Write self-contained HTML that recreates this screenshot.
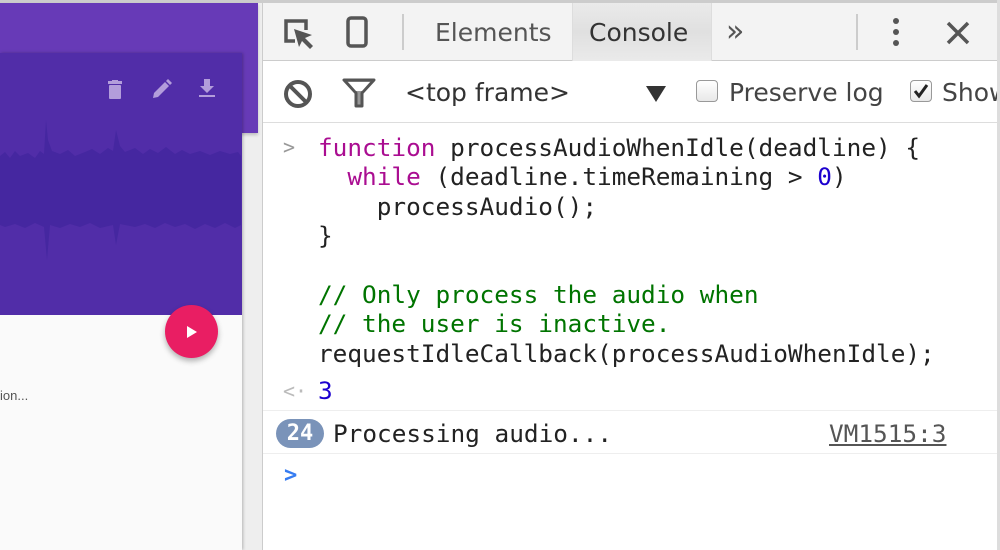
<!DOCTYPE html>
<html><head><meta charset="utf-8"><style>
*{margin:0;padding:0;box-sizing:border-box}
body{width:1000px;height:550px;overflow:hidden;background:#fff;position:relative;font-family:"Liberation Sans",sans-serif}
.abs{position:absolute}
.mono{font-family:"DejaVu Sans Mono","Liberation Mono",monospace;font-size:24.4px;white-space:pre;line-height:29.4px;color:#222}
.ui{font-family:"DejaVu Sans","Liberation Sans",sans-serif;font-size:25px;color:#333}
</style></head><body>
<!-- left page -->
<div class="abs" style="left:0;top:0;width:262px;height:550px;background:#eeeeee"></div>
<div class="abs" style="left:0;top:0;width:262px;height:3px;background:#ccc"></div>
<div class="abs" style="left:0;top:3px;width:258px;height:130px;background:#673ab7;box-shadow:0 2px 3px rgba(0,0,0,.2)"></div>
<div class="abs" style="left:0;top:53px;width:242px;height:497px;background:#fafafa;box-shadow:1px 0 3px rgba(0,0,0,.25)"></div>
<div class="abs" style="left:0;top:53px;width:242px;height:262px;background:#512da8"></div>
<svg class="abs" style="left:0;top:100px" width="242" height="160" viewBox="0 0 242 160">
<path fill="#4527a0" d="M0 56 L5 52 L10 58 L15 51 L20 56 L28 53 L35 58 L40 51 L44 54 L46 20 L48 40 L52 51 L60 54 L68 50 L75 56 L85 52 L92 49 L100 54 L108 48 L113 51 L116 30 L120 46 L125 52 L135 48 L143 54 L150 49 L158 53 L166 47 L175 54 L182 50 L190 54 L200 51 L210 55 L220 51 L230 54 L238 52 L241 56 L241 125 L235 128 L225 123 L215 128 L205 124 L195 129 L185 124 L175 127 L165 123 L155 128 L145 124 L135 127 L120 124 L116 145 L113 125 L100 128 L90 123 L80 127 L70 124 L60 128 L50 125 L47 160 L44 127 L35 123 L25 128 L15 124 L5 127 L0 125 Z"/>
</svg>
<svg class="abs" style="left:106px;top:80px" width="18" height="20" viewBox="0 0 18 20"><rect x="2" y="1" width="14" height="3" fill="#b39ddb"/><rect x="6" y="0" width="6" height="2" fill="#b39ddb"/><rect x="3" y="5" width="12" height="14" rx="1" fill="#b39ddb"/></svg>
<svg class="abs" style="left:151px;top:79px" width="21" height="21" viewBox="0 0 21 21"><path d="M2 19 L3 14 L14 3 L18 7 L7 18 Z M15 2 L17 0 L21 4 L19 6Z" fill="#b39ddb"/></svg>
<svg class="abs" style="left:198px;top:79px" width="18" height="20" viewBox="0 0 18 20"><path d="M6 0 H12 V7 H16 L9 14 L2 7 H6Z" fill="#b39ddb"/><rect x="1" y="16" width="16" height="2" fill="#b39ddb"/></svg>
<div class="abs" style="left:165px;top:305px;width:53px;height:53px;border-radius:50%;background:#e91e63;box-shadow:0 3px 6px rgba(0,0,0,.3)"></div>
<svg class="abs" style="left:186px;top:325px" width="12" height="14"><path d="M1 1 L11 7 L1 13Z" fill="#fff"/></svg>
<div class="abs" style="left:0;top:388px;font-size:13px;color:#555">ion...</div>
<!-- devtools -->
<div class="abs" style="left:262px;top:0;width:738px;height:550px;background:#fff;border-left:1px solid #ccc"></div>
<div class="abs" style="left:263px;top:0;width:737px;height:3px;background:#ccc"></div>
<div class="abs" style="left:263px;top:3px;width:737px;height:58px;background:#f3f3f3;border-bottom:1px solid #ccc"></div>
<div class="abs" style="left:572px;top:3px;width:140px;height:58px;background:linear-gradient(#eaeaea,#e0e0e0,#eaeaea);border-left:1px solid #ddd;border-right:1px solid #ddd"></div>
<svg class="abs" style="left:282px;top:17px" width="34" height="34" viewBox="0 0 34 34"><path d="M13 24 H4 V4 H24 V13" fill="none" stroke="#555" stroke-width="3.5"/><path d="M12 12 L30 18 L23 21 L31 29 L28 32 L20 24 L17 30Z" fill="#555"/></svg>
<svg class="abs" style="left:346px;top:16px" width="22" height="32"><rect x="2" y="2" width="18" height="28" rx="3" fill="none" stroke="#555" stroke-width="3.5"/></svg>
<div class="abs" style="left:402px;top:14px;width:2px;height:36px;background:#ccc"></div>
<div class="abs ui" style="left:435px;top:18px;color:#555">Elements</div>
<div class="abs ui" style="left:589px;top:18px;color:#333">Console</div>
<div class="abs ui" style="left:726px;top:14px;color:#555;font-size:30px">»</div>
<div class="abs" style="left:856px;top:14px;width:2px;height:36px;background:#ccc"></div>
<svg class="abs" style="left:890px;top:16px" width="12" height="32"><circle cx="6" cy="5" r="3" fill="#555"/><circle cx="6" cy="16" r="3" fill="#555"/><circle cx="6" cy="27" r="3" fill="#555"/></svg>
<svg class="abs" style="left:945px;top:20px" width="26" height="26"><path d="M3 3 L23 23 M23 3 L3 23" stroke="#555" stroke-width="3.5"/></svg>
<div class="abs" style="left:263px;top:122px;width:737px;height:1px;background:#ddd"></div>
<svg class="abs" style="left:282px;top:78px" width="32" height="32"><circle cx="16" cy="16" r="12" fill="none" stroke="#555" stroke-width="4"/><path d="M8 8 L24 24" stroke="#555" stroke-width="4"/></svg>
<svg class="abs" style="left:342px;top:78px" width="34" height="30"><path d="M2 2 H32 L20 15 V28 H14 V15Z" fill="#999" stroke="#555" stroke-width="3" stroke-linejoin="round"/><path d="M6 4 H28 L20 13 H14Z" fill="#fff"/></svg>
<div class="abs ui" style="left:405px;top:78px;color:#333">&lt;top frame&gt;</div>
<svg class="abs" style="left:645px;top:85px" width="22" height="18"><path d="M1 1 H21 L11 17Z" fill="#333"/></svg>
<div class="abs" style="left:696px;top:80px;width:22px;height:22px;border:1.5px solid #999;border-radius:4px;background:linear-gradient(#fff,#e8e8e8)"></div>
<div class="abs ui" style="left:729px;top:78px;color:#444">Preserve log</div>
<div class="abs" style="left:910px;top:80px;width:22px;height:22px;border:1.5px solid #999;border-radius:4px;background:linear-gradient(#fff,#e8e8e8)"></div>
<svg class="abs" style="left:912px;top:82px" width="18" height="18"><path d="M3 9 L7 14 L15 3" fill="none" stroke="#222" stroke-width="3"/></svg>
<div class="abs ui" style="left:942px;top:78px;color:#444">Show</div>
<div class="abs mono" style="left:283px;top:133px;color:#999;font-size:20px">&gt;</div>
<div class="abs mono" style="left:318px;top:133px"><span style="color:#aa0d91">function</span> processAudioWhenIdle(deadline) {
  <span style="color:#aa0d91">while</span> (deadline.timeRemaining &gt; <span style="color:#1c00cf">0</span>)
    processAudio();
}

<span style="color:#007400">// Only process the audio when</span>
<span style="color:#007400">// the user is inactive.</span>
requestIdleCallback(processAudioWhenIdle);</div>
<div class="abs mono" style="left:283px;top:377px;color:#bbb;font-size:20px">&lt;·</div>
<div class="abs mono" style="left:318px;top:376px;color:#1c00cf">3</div>
<div class="abs" style="left:263px;top:410px;width:737px;height:1px;background:#eee"></div>
<div class="abs" style="left:276px;top:419px;width:48px;height:29px;border-radius:15px;background:#7a93b9;color:#fff;font-family:'DejaVu Sans Mono',monospace;font-size:22px;font-weight:bold;text-align:center;line-height:29px">24</div>
<div class="abs mono" style="left:333px;top:419px">Processing audio...</div>
<div class="abs mono" style="left:829px;top:419px;color:#555;text-decoration:underline">VM1515:3</div>
<div class="abs" style="left:263px;top:453px;width:737px;height:1px;background:#eee"></div>
<div class="abs mono" style="left:284px;top:461px;color:#367cf1;font-size:22px;font-weight:bold">&gt;</div>
<div class="abs" style="left:997px;top:0;width:3px;height:550px;background:#ddd"></div>
</body></html>
